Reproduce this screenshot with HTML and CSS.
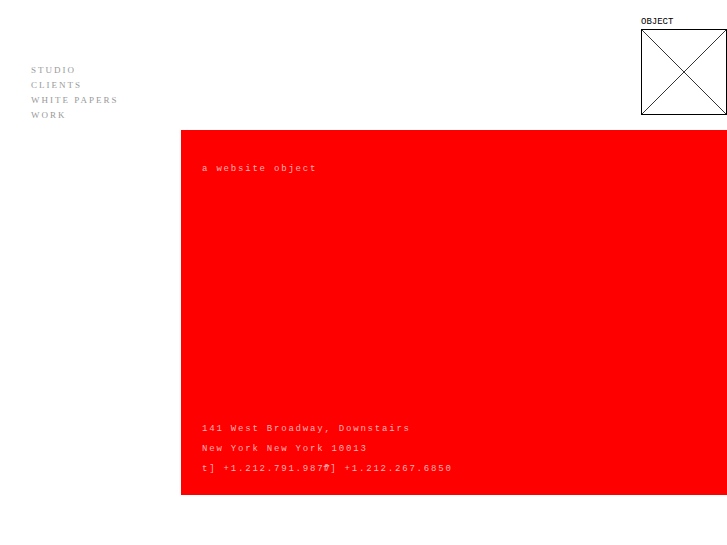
FILE: index.html
```html
<!DOCTYPE html>
<html lang="en">

<head>
  <meta charset="UTF-8">
  <meta name="viewport" content="width=device-width, initial-scale=1.0">
  <title>Object</title>
  <link rel="stylesheet" href="styles.css">
</head>

<body>
  <header class="header">
    <nav>
      <ul class="menu">
        <li><a href="#studio">STUDIO</a></li>
        <li><a href="#clients">CLIENTS</a></li>
        <li><a href="#papers">WHITE PAPERS</a></li>
        <li><a href="#work">WORK</a></li>
      </ul>
    </nav>

    <a class="logo" href="#home">
      <span class="logo__name">OBJECT</span>
      <svg class="logo__box" width="86" height="86" viewBox="0 0 86 86" fill="none" stroke="#000" aria-hidden="true">
        <rect x="0.5" y="0.5" width="85" height="85" />
        <path d="M0.5 0.5L85.5 85.5M85.5 0.5L0.5 85.5" stroke-width="0.8" />
      </svg>
    </a>
  </header>

  <main class="panel">
    <p class="panel__line">a website object</p>

    <address class="contact">
      <p class="panel__line">141 West Broadway, Downstairs</p>
      <p class="panel__line">New York New York 10013</p>
      <p class="panel__line contact__phones">
        <span class="contact__tel">t] +1.212.791.9877</span>
        <span>f] +1.212.267.6850</span>
      </p>
    </address>
  </main>
</body>

</html>
```

FILE: styles.css
```css
* {
  box-sizing: border-box;
}

body {
  margin: 0;
  background-color: #fff;
}

a {
  color: inherit;
  text-decoration: none;
}

.header {
  display: flex;
  justify-content: space-between;
  align-items: flex-end;
  padding: 15px 0 15px 31px;
}

.menu {
  margin: 0 0 -8px;
  padding: 0;
  list-style: none;
  color: #999;
  font-family: "Liberation Serif", "Times New Roman", serif;
  font-size: 9px;
  line-height: 15px;
  letter-spacing: 2px;
}

.logo {
  display: flex;
  flex-direction: column;
  color: #000;
}

.logo__name {
  font-family: "Liberation Mono", "Courier New", monospace;
  font-size: 9px;
  line-height: 14px;
}

.logo__box {
  display: block;
}

.panel {
  display: flex;
  flex-direction: column;
  justify-content: space-between;
  min-height: 365px;
  margin-left: 181px;
  padding: 29px 21px 16px;
  background-color: #f00;
  color: #ffb0b0;
  font-family: "Liberation Mono", "Courier New", monospace;
  font-size: 9px;
  line-height: 20px;
  letter-spacing: 0.2em;
}

.panel__line {
  margin: 0;
}

.contact {
  font-style: normal;
}

.contact__phones {
  display: flex;
  white-space: nowrap;
}

/* fixed column, the number is allowed to run over it */
.contact__tel {
  flex: none;
  width: 121px;
}
```
